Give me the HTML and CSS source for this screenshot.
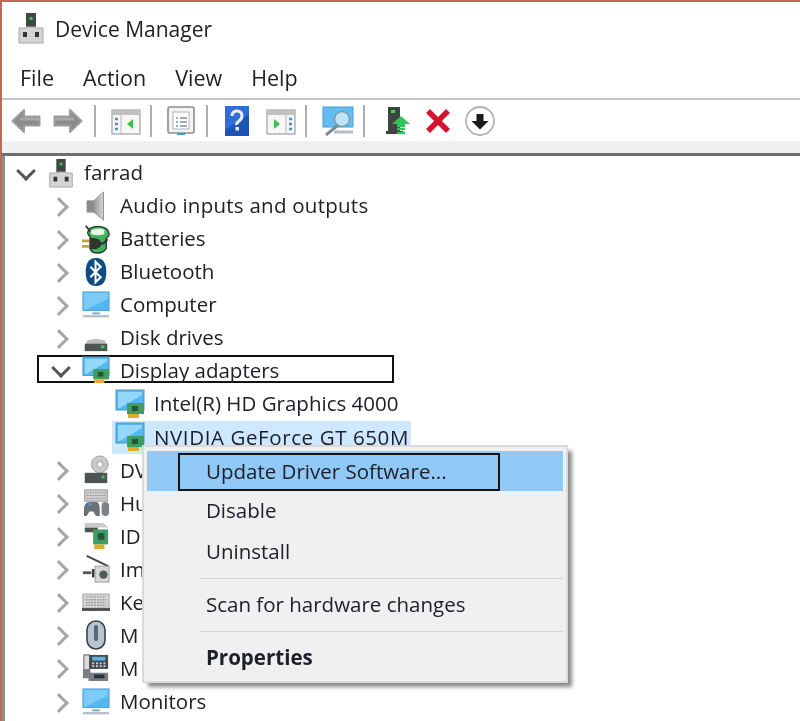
FILE: index.html
```html
<!DOCTYPE html>
<html lang="en">
<head>
<meta charset="utf-8">
<title>Device Manager</title>
<link rel="stylesheet" href="styles.css">
</head>
<body>
<svg class="defs" width="0" height="0" aria-hidden="true">
  <defs>
    <linearGradient id="g-cone" x1="0" x2="1" y1="0" y2="0">
      <stop offset="0" stop-color="#9a9a9a"/>
      <stop offset="1" stop-color="#d6d6d6"/>
    </linearGradient>
    <symbol id="i-host" viewBox="0 0 26 32">
      <rect x="8" y="1" width="10" height="15" fill="#3d4a44"/>
      <rect x="11.5" y="5" width="3" height="3" fill="#45c060"/>
      <path d="M1 16h7v-1h10v1h7v15H1z" fill="#d4d4d4" stroke="#a8a8a8"/>
      <rect x="5" y="20" width="4" height="5" fill="#333"/>
      <rect x="17" y="20" width="4" height="5" fill="#333"/>
    </symbol>
    <symbol id="i-audio" viewBox="0 0 26 32">
      <path d="M3 10h8v13H3z" fill="#8a8a8a"/>
      <path d="M11 10 21 1v30L11 23z" fill="url(#g-cone)" stroke="#8d8d8d"/>
    </symbol>
    <symbol id="i-battery" viewBox="0 0 30 32">
      <path d="M8 5q9-5 18 0q3 2 3 7-1 2-3 3v11q-3 5-9 5-7 0-8-4V14q-3-3-3-5z" fill="#43b358" stroke="#2e3a32" stroke-width="1.500"/>
      <path d="M9 7q8-4 15-1v5q-7 2-14 0z" fill="#e6f5e8"/>
      <path d="M4 2l5 6" stroke="#3c3c3c" stroke-width="2"/>
      <path d="M0 18h8M0 24h8" stroke="#c9a13a" stroke-width="3"/>
      <path d="M8 15h5q7 1 8 6-1 5-8 6H8z" fill="#2f3431"/>
      <path d="M20 21q5 0 7-5" fill="none" stroke="#333" stroke-width="2.500"/>
    </symbol>
    <symbol id="i-bluetooth" viewBox="0 0 26 32">
      <path d="M13 1c8 0 11 6 11 15s-3 15-11 15S2 25 2 16 5 1 13 1z" fill="#0f4c81"/>
      <path d="M7 10.500 18 21.500l-5.500 5.500V5L18 10.500 7 21.500" fill="none" stroke="#fff" stroke-width="2.200"/>
    </symbol>
    <symbol id="i-monitor" viewBox="0 0 30 30">
      <rect x="1" y="1" width="28" height="20" fill="#54b7f0" stroke="#4d9ccc"/>
      <path d="M2 2h26v6L4 20H2z" fill="#7ccbf8"/>
      <path d="M11 24h8" stroke="#7fa4bb" stroke-width="2"/>
      <path d="M1 27h28" stroke="#b4c0c8" stroke-width="2.500"/>
    </symbol>
    <symbol id="i-disk" viewBox="0 0 26 32">
      <path d="M3 19q10-4 20 0v3H3z" fill="#bcbcbc"/>
      <rect x="1" y="22" width="24" height="8" fill="#4e5552"/>
      <rect x="18" y="24" width="4" height="3" fill="#45c060"/>
    </symbol>
    <symbol id="i-display" viewBox="0 0 30 30">
      <rect x="1" y="1" width="28" height="20" fill="#54b7f0" stroke="#4d94c4"/>
      <path d="M3 3h24v3L5 19H3z" fill="#93d7fb"/>
      <rect x="12" y="14" width="17" height="11" fill="#3f9d63"/>
      <rect x="17" y="17" width="6" height="5" fill="#27543a"/>
      <rect x="13" y="25" width="11" height="4" fill="#e5a92d"/>
    </symbol>
    <symbol id="i-dvd" viewBox="0 0 26 32">
      <circle cx="17" cy="10" r="9" fill="#c8c8c8" stroke="#a0a0a0"/>
      <circle cx="17" cy="10" r="3" fill="#fff" stroke="#999"/>
      <rect x="1" y="19" width="24" height="11" fill="#4e5552"/>
      <rect x="19" y="22" width="3" height="3" fill="#45c060"/>
    </symbol>
    <symbol id="i-hid" viewBox="0 0 30 30">
      <rect x="3" y="1" width="24" height="12" fill="#d2d2d2" stroke="#8c8c8c"/>
      <path d="M5 4h20M5 7h20M5 10h20" stroke="#8c8c8c" stroke-dasharray="2 1"/>
      <path d="M2 23q0-9 6-9h8q3 2 3 7v8h-4l-3-5H8l-3 5H2z" fill="#6c7278"/>
      <rect x="7" y="15" width="3" height="3" fill="#3d9be0"/>
      <rect x="21" y="14" width="8" height="15" rx="4" fill="#7d8388"/>
    </symbol>
    <symbol id="i-ide" viewBox="0 0 30 30">
      <path d="M3 1h20l5 5H3z" fill="#c9c9c9"/>
      <rect x="3" y="6" width="14" height="5" fill="#4e5552"/>
      <rect x="12" y="8" width="16" height="16" fill="#3f9d63"/>
      <rect x="17" y="12" width="7" height="7" fill="#27543a"/>
      <rect x="13" y="24" width="11" height="5" fill="#e5a92d"/>
    </symbol>
    <symbol id="i-imaging" viewBox="0 0 30 30">
      <path d="M5 1 28 12" stroke="#454545" stroke-width="2"/>
      <rect x="14" y="12" width="15" height="17" fill="#d6d6d6" stroke="#9c9c9c"/>
      <circle cx="23" cy="21" r="4.500" fill="#4b5a5a"/>
      <path d="M1 19h9" stroke="#555" stroke-width="3"/>
      <path d="M12 15v9" stroke="#333" stroke-width="2.500"/>
    </symbol>
    <symbol id="i-keyboard" viewBox="0 0 30 20">
      <rect x="1" y="1" width="28" height="15" fill="#d8d8d8" stroke="#9c9c9c"/>
      <path d="M4 4h22M4 7h22M4 10h22M4 13h22" stroke="#9a9a9a" stroke-width="1.500" stroke-dasharray="2 1"/>
      <rect x="0" y="16" width="30" height="3" fill="#4c4c4c"/>
    </symbol>
    <symbol id="i-mouse" viewBox="0 0 22 30">
      <rect x="2" y="1" width="18" height="28" rx="9" fill="#b7c5d2" stroke="#39424a" stroke-width="1.600"/>
      <rect x="9" y="5" width="4" height="16" rx="2" fill="#5a6670"/>
    </symbol>
    <symbol id="i-modem" viewBox="0 0 30 30">
      <rect x="2" y="1" width="6" height="16" fill="#dcdcdc" stroke="#555"/>
      <rect x="8" y="1" width="20" height="15" fill="#444c50"/>
      <rect x="11" y="3" width="14" height="4" fill="#5ab4ec"/>
      <path d="M11 10h14M11 13h14" stroke="#d8d8d8" stroke-width="2" stroke-dasharray="2 2"/>
      <path d="M1 17h8v3h19v9H7v-3H1z" fill="#777d80"/>
      <rect x="13" y="22" width="11" height="4" fill="#27343c"/>
    </symbol>
    <symbol id="i-arrow" viewBox="0 0 30 28">
      <path d="M1.500 14 13 3v6.500h15.500v9H13V25z" fill="#8c8c8c" stroke="#9c9c9c" stroke-width="2" stroke-linejoin="round"/>
      <path d="M9 12h19" stroke="#a9a9a9" stroke-width="3"/>
    </symbol>
    <symbol id="i-panel" viewBox="0 0 30 26">
      <rect x="1" y="1" width="28" height="24" fill="#f6f6f6" stroke="#8f8f8f"/>
      <rect x="1" y="1" width="28" height="5" fill="#c0c0c0"/>
      <path d="M10 6v19" stroke="#b9b9b9"/>
      <path d="M4 10h3M4 15h3M4 20h3" stroke="#4d90c6" stroke-width="2.500"/>
      <path d="M22 10v10l-6-5z" fill="#3cc050"/>
    </symbol>
    <symbol id="i-props" viewBox="0 0 28 30">
      <rect x="1" y="1" width="26" height="26" rx="2" fill="#f3f3f3" stroke="#8d8d8d" stroke-width="1.600"/>
      <rect x="6" y="6" width="16" height="17" fill="#fff" stroke="#b3b3b3"/>
      <path d="M9 12h2M13 12h7M9 16h2M13 16h7M9 20h2M13 20h7" stroke="#7a92a8" stroke-width="1.500"/>
      <rect x="10" y="27" width="8" height="2" fill="#3d9be0"/>
    </symbol>
    <symbol id="i-help" viewBox="0 0 24 30">
      <rect width="24" height="30" fill="#1e55b5"/>
      <path d="M0 0h24v8L0 24z" fill="#2f6fd4"/>
      <path d="M7 10q0-5 5-5t5 5q0 3-3 5t-2 4" fill="none" stroke="#e8edf8" stroke-width="3"/>
      <rect x="10.500" y="21" width="3.500" height="3.500" fill="#e8edf8"/>
    </symbol>
    <symbol id="i-scan" viewBox="0 0 32 30">
      <rect x="1" y="1" width="30" height="20" fill="#63bdf2" stroke="#4d9ccc"/>
      <path d="M4 29 15 20" stroke="#7f8a90" stroke-width="3"/>
      <path d="M12 26h19" stroke="#b4bec4" stroke-width="3"/>
      <circle cx="20" cy="13" r="7.500" fill="#bfe4f8" stroke="#7f98a8" stroke-width="1.500"/>
    </symbol>
    <symbol id="i-update" viewBox="0 0 26 30">
      <rect x="3" y="1" width="12" height="24" fill="#3d4540"/>
      <rect x="6" y="4" width="4" height="3" fill="#45d060"/>
      <rect x="1" y="25" width="17" height="3" fill="#3d4540"/>
      <path d="M16 10l9 8h-5v3h-8v-3H7z" fill="#35c25a"/>
      <path d="M12 23h8M12 27h8" stroke="#35c25a" stroke-width="2.500"/>
    </symbol>
    <symbol id="i-x" viewBox="0 0 26 26">
      <path d="M3 3 23 23M23 3 3 23" stroke="#d2142c" stroke-width="5.500"/>
    </symbol>
    <symbol id="i-down" viewBox="0 0 30 30">
      <circle cx="15" cy="15" r="14" fill="#fff" stroke="#b3b3b3" stroke-width="1.800"/>
      <path d="M11.500 8h7v7h5l-8.500 8.500L6.500 15h5z" fill="#1a1a1a"/>
    </symbol>
  </defs>
</svg>

<div class="window">
  <header class="title-bar">
    <svg class="title-icon"><use href="#i-host"/></svg>
    <span class="title-text">Device Manager</span>
  </header>

  <nav class="menu-bar">
    <span class="menu-item">File</span>
    <span class="menu-item">Action</span>
    <span class="menu-item">View</span>
    <span class="menu-item">Help</span>
  </nav>

  <div class="tool-bar">
    <svg class="tb tb-arrow"><use href="#i-arrow"/></svg>
    <svg class="tb tb-arrow flip"><use href="#i-arrow"/></svg>
    <i class="sep"></i>
    <svg class="tb tb-panel"><use href="#i-panel"/></svg>
    <i class="sep"></i>
    <svg class="tb tb-props"><use href="#i-props"/></svg>
    <i class="sep"></i>
    <svg class="tb tb-help"><use href="#i-help"/></svg>
    <svg class="tb tb-panel flip tb-panel2"><use href="#i-panel"/></svg>
    <i class="sep"></i>
    <svg class="tb tb-scan"><use href="#i-scan"/></svg>
    <i class="sep"></i>
    <svg class="tb tb-update"><use href="#i-update"/></svg>
    <svg class="tb tb-x"><use href="#i-x"/></svg>
    <svg class="tb tb-down"><use href="#i-down"/></svg>
  </div>
  <div class="tool-strip"></div>

  <main class="tree">
    <div class="row lvl0"><i class="chev open"></i><svg class="ic"><use href="#i-host"/></svg><span>farrad</span></div>
    <div class="row lvl1"><i class="chev"></i><svg class="ic"><use href="#i-audio"/></svg><span class="wide">Audio inputs and outputs</span></div>
    <div class="row lvl1"><i class="chev"></i><svg class="ic"><use href="#i-battery"/></svg><span>Batteries</span></div>
    <div class="row lvl1"><i class="chev"></i><svg class="ic"><use href="#i-bluetooth"/></svg><span>Bluetooth</span></div>
    <div class="row lvl1"><i class="chev"></i><svg class="ic"><use href="#i-monitor"/></svg><span>Computer</span></div>
    <div class="row lvl1"><i class="chev"></i><svg class="ic"><use href="#i-disk"/></svg><span>Disk drives</span></div>
    <div class="row lvl1 focused"><i class="chev open"></i><svg class="ic"><use href="#i-display"/></svg><span>Display adapters</span></div>
    <div class="row lvl2"><svg class="ic"><use href="#i-display"/></svg><span>Intel(R) HD Graphics 4000</span></div>
    <div class="row lvl2 selected"><svg class="ic"><use href="#i-display"/></svg><span class="wider">NVIDIA GeForce GT 650M</span></div>
    <div class="row lvl1"><i class="chev"></i><svg class="ic"><use href="#i-dvd"/></svg><span>DV</span></div>
    <div class="row lvl1"><i class="chev"></i><svg class="ic"><use href="#i-hid"/></svg><span>Hu</span></div>
    <div class="row lvl1"><i class="chev"></i><svg class="ic"><use href="#i-ide"/></svg><span>ID</span></div>
    <div class="row lvl1"><i class="chev"></i><svg class="ic"><use href="#i-imaging"/></svg><span>Im</span></div>
    <div class="row lvl1"><i class="chev"></i><svg class="ic ic-kbd"><use href="#i-keyboard"/></svg><span>Ke</span></div>
    <div class="row lvl1"><i class="chev"></i><svg class="ic"><use href="#i-mouse"/></svg><span>M</span></div>
    <div class="row lvl1"><i class="chev"></i><svg class="ic"><use href="#i-modem"/></svg><span>M</span></div>
    <div class="row lvl1"><i class="chev"></i><svg class="ic"><use href="#i-monitor"/></svg><span>Monitors</span></div>
  </main>

  <div class="context-menu">
    <div class="cm-item active"><span class="cm-focus">Update Driver Software...</span></div>
    <div class="cm-item">Disable</div>
    <div class="cm-item">Uninstall</div>
    <hr class="cm-sep">
    <div class="cm-item">Scan for hardware changes</div>
    <hr class="cm-sep">
    <div class="cm-item bold">Properties</div>
  </div>
</div>
</body>
</html>
```
FILE: styles.css
```css
* { box-sizing: border-box; }
html, body { margin: 0; height: 100%; background: #fff; overflow: hidden; }
.defs { position: absolute; }

.window {
  position: relative;
  width: 800px;
  height: 721px;
  background: #fff;
  border-top: 2px solid #c8635a;
  border-left: 2px solid #c8635a;
  font-family: "Open Sans", "Noto Sans", sans-serif;
  font-size: 20.500px;
  color: #20202a;
  filter: blur(0.35px);
  overflow: hidden;
}

.title-bar { display: flex; align-items: center; height: 54px; padding-left: 16px; }
.title-icon { width: 26px; height: 32px; margin-top: -2px; }
.title-text { margin-left: 11px; font-size: 21px; }

.menu-bar { display: flex; height: 42px; align-items: center; padding-left: 18px; gap: 29px; font-size: 21.500px; }

.tool-bar {
  display: flex;
  align-items: center;
  height: 43px;
  border-top: 2px solid #c4c4c4;
  padding-left: 9px;
}
.tool-strip { height: 15px; background: #f0f0f0; border-bottom: 3px solid #6f6f6f; }

.tb { flex: none; }
.flip { transform: scaleX(-1); }
.tb-arrow { width: 30px; height: 28px; margin-right: 12px; }
.sep { width: 2px; height: 32px; background: #adadad; margin: 0 15px 0 -1px; }
.tb-panel { width: 30px; height: 26px; margin: 2px 10px 0 0; }
.tb-panel2 { margin: 2px 10px 0 17px; }
.tb-props { width: 28px; height: 30px; margin-right: 12px; }
.tb-help { width: 24px; height: 30px; margin-left: 2px; }
.tb-scan { width: 32px; height: 30px; margin-right: 10px; }
.tb-update { width: 26px; height: 30px; margin-left: 5px; }
.tb-x { width: 26px; height: 26px; margin-left: 14px; }
.tb-down { width: 30px; height: 30px; margin-left: 14px; }

.tree { box-shadow: inset 3px 0 0 #8c8c8c; height: 100%; }
.row { display: flex; align-items: center; height: 33.070px; line-height: 27px; }
.row span { white-space: nowrap; }
.wide { letter-spacing: 0.250px; }
.wider { letter-spacing: 0.600px; }
.lvl0 { padding-left: 15px; }
.lvl0 .ic { margin-right: 9px; }
.lvl1 { padding-left: 50px; }
.lvl2 { padding-left: 113px; }

.chev { position: relative; flex: none; width: 16px; height: 16px; margin-right: 14px; }
.chev::before {
  content: "";
  position: absolute;
  left: 0;
  top: 2px;
  width: 11px;
  height: 11px;
  border-top: 3px solid #a6a6a6;
  border-right: 3px solid #a6a6a6;
  transform: rotate(45deg);
}
.chev.open::before {
  left: 2px;
  top: -1px;
  border-color: #555;
  transform: rotate(135deg);
}

.ic { flex: none; width: 28px; height: 30px; margin-right: 10px; }
.ic-kbd { height: 19px; }
.lvl2 .ic { width: 30px; height: 30px; margin-right: 9px; }

.focused { height: 28px; margin: 1px 0 4.070px 35px; width: 357px; border: 2px solid #111; padding: 2px 0 0 13px; }
.selected {
  width: 299px;
  margin-left: 110px;
  padding-left: 3px;
  background: #cde8ff;
}

.context-menu {
  position: absolute;
  left: 140px;
  top: 443px;
  width: 426px;
  height: 238px;
  padding: 4px 3px 0;
  background: #f0f0f0;
  border: 2px solid #dadada;
  box-shadow: 5px 5px 4px -1px #8a8a8a;
}
.cm-item { display: flex; align-items: center; height: 41px; padding: 0 0 3px 59px; white-space: nowrap; }
.cm-item.active { background: #90c8f6; padding: 0 0 0 31px; height: 40px; align-items: flex-end; }
.cm-focus {
  display: flex;
  align-items: center;
  height: 38px;
  width: 322px;
  padding: 0 0 2px 26px;
  border: 2px solid #111;
}
.cm-sep { height: 1px; margin: 5px 0 6px 52px; border: 0; background: #d4d4d4; }
.bold { font-weight: 700; }
```
